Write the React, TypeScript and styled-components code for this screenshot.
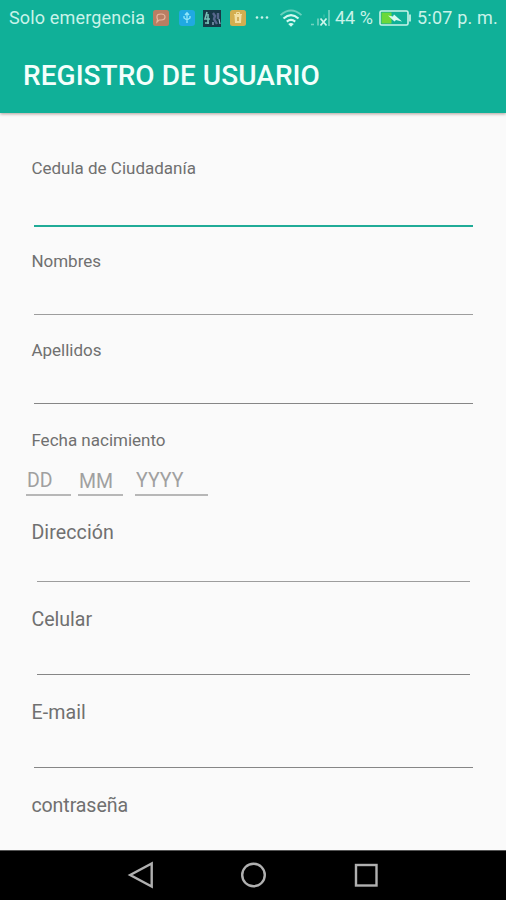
import React from 'react';
import styled, { createGlobalStyle } from 'styled-components';

const GlobalStyle = createGlobalStyle`
  * { box-sizing: border-box; }
  body { margin: 0; background: #fafafa; font-family: Roboto, sans-serif; }
`;

const Screen = styled.div`
  display: flex;
  flex-direction: column;
  width: 506px;
  height: 900px;
  overflow: hidden;
  background: #fafafa;
`;

const Header = styled.header`
  flex: none;
  height: 113px;
  background: #10b098;
  box-shadow: 0 1px 3px rgba(60, 20, 10, 0.4);
`;

const StatusBar = styled.div`
  display: flex;
  align-items: center;
  height: 36px;
  padding-left: 9px;
  color: #c9f3e9;
`;

const StatusText = styled.span<{ $width: number; $spacing?: number; $left?: number }>`
  flex: none;
  width: ${p => p.$width}px;
  margin-left: ${p => p.$left ?? 0}px;
  font-size: 18px;
  line-height: 22px;
  white-space: nowrap;
  letter-spacing: ${p => p.$spacing ?? 0}px;
`;

const StatusIcon = styled.svg<{ $left: number }>`
  flex: none;
  display: block;
  margin-left: ${p => p.$left}px;
`;

const Title = styled.h1`
  margin: 0;
  padding: 23px 0 0 23px;
  color: #f4fffc;
  font-size: 28px;
  font-weight: 500;
  line-height: 34px;
  letter-spacing: 0.04px;
`;

const Form = styled.form`
  flex: 1;
  min-height: 0;
  overflow: hidden;
  padding: 45px 33px 0 31px;
`;

const Field = styled.div<{ $after?: number }>`
  display: flex;
  flex-direction: column;
  align-items: flex-start;
  margin-bottom: ${p => p.$after ?? 26}px;
`;

const Label = styled.label<{ $large?: boolean; $spacing?: number }>`
  padding-left: 0.4px;
  color: #707070;
  font-size: ${p => (p.$large ? 19.6 : 17)}px;
  line-height: ${p => (p.$large ? 24 : 20)}px;
  letter-spacing: ${p => p.$spacing ?? 0}px;
`;

const Input = styled.input<{ $height: number; $inset?: boolean; $active?: boolean; $tone?: string }>`
  width: ${p => (p.$inset ? 433 : 439)}px;
  height: ${p => p.$height}px;
  margin: 0 0 0 ${p => (p.$inset ? 6 : 3)}px;
  padding: 0;
  border: 0;
  border-bottom: ${p => (p.$active ? '2px solid #20ab97' : `1px solid ${p.$tone ?? '#868686'}`)};
  outline: 0;
  background: transparent;
  font: 18px Roboto, sans-serif;
`;

const DateRow = styled.div`
  display: flex;
  align-items: flex-end;
  height: 46px;
  margin-left: -5px;
`;

const DateInput = styled.input<{ $width: number; $left?: number; $top: number }>`
  width: ${p => p.$width}px;
  height: 34px;
  margin: 0 0 0 ${p => p.$left ?? 0}px;
  padding: ${p => p.$top}px 0 0 1px;
  border: 0;
  border-bottom: 2px solid #b7b7b7;
  border-radius: 0;
  outline: 0;
  background: transparent;
  font: 19.5px Roboto, sans-serif;
  &::placeholder { color: #a0a0a0; opacity: 1; }
`;

const NavBar = styled.nav`
  flex: none;
  display: flex;
  align-items: center;
  justify-content: center;
  gap: 85px;
  height: 50px;
  border-top: 1px solid #555;
  background: #000;
`;

const NavIcon = styled.svg`
  display: block;
  margin-top: -2px;
  fill: none;
  stroke: #b0b0b0;
  stroke-width: 2.4;
`;

function StatusIcons() {
  return (
    <>
      <StatusIcon $left={7} width="18" height="18" viewBox="0 0 18 18">
        <rect x="1" y="1" width="16" height="16" rx="2.5" fill="#b97e63" />
        <path d="M5 7.5Q5 5 9 5t4 3-4 3H7l-2 2 .5-3Q4.7 9 5 7.5Z" fill="none" stroke="#e6b69f" strokeWidth="1.2" />
      </StatusIcon>
      <StatusIcon $left={8} width="18" height="18" viewBox="0 0 18 18">
        <rect x="1" y="1" width="16" height="16" rx="3" fill="#20a9e2" />
        <path d="M9 14V5M7 6l2-2.3L11 6M6 7v2l3 2 3-2V7" fill="none" stroke="#92e6fa" strokeWidth="1.3" />
      </StatusIcon>
      <StatusIcon $left={6} width="20" height="19" viewBox="0 0 20 19">
        <path d="M1 1h18v17H1Z" fill="#173947" />
        <path d="M5 3 3 10h5M6 5v10M3 14h4" fill="none" stroke="#78bfb7" strokeWidth="1.6" />
        <path d="m11 4 2 3-1 3 3 5M16 4v6" fill="none" stroke="#56678c" strokeWidth="2.4" />
        <path d="M11 13v3M17 10l1 5" stroke="#9bb5cf" strokeWidth="1.2" />
      </StatusIcon>
      <StatusIcon $left={7} width="18" height="18" viewBox="0 0 18 18">
        <rect x="1" y="1" width="16" height="16" rx="2.5" fill="#d3ae50" />
        <path d="M5.5 6h7l-.5 8H6Z" fill="#f2dfa2" />
        <path d="M5 5.5h8M7.5 5V3.5h3V5" fill="none" stroke="#f2dfa2" />
        <path d="M9 8v4" stroke="#c39b3e" strokeWidth="1.4" />
      </StatusIcon>
      <StatusIcon $left={7} width="16" height="6" viewBox="0 0 16 6" fill="#c9f3e9">
        <circle cx="3" cy="2.5" r="1.3" />
        <circle cx="8" cy="2.5" r="1.3" />
        <circle cx="13" cy="2.5" r="1.3" />
      </StatusIcon>
      <StatusIcon $left={9} width="24" height="20" viewBox="0 0 24 20" fill="none" strokeWidth="1.8">
        <path d="M1.5 7.2Q12-2.2 22.5 7.2" stroke="#68d0bd" />
        <path d="M4.5 10.5q7.5-6.7 15 0M7.8 13.6q4.2-3.5 8.4 0" stroke="#d4faf1" strokeWidth="2.2" />
        <path d="m9.2 16 2.8 2.8 2.8-2.8q-2.8-2-5.6 0Z" fill="#d4faf1" stroke="none" />
      </StatusIcon>
      <StatusIcon $left={7} width="22" height="19" viewBox="0 0 22 19" fill="none">
        <path d="M1 15.5h3M8 9.5v7M19 1v16" stroke="#72d2c0" strokeWidth="1.7" />
        <path d="M14 5.5v3" stroke="#4fc5af" />
        <path d="m10.5 9.5 6 7m0-7-6 7" stroke="#cef6ec" strokeWidth="1.8" />
      </StatusIcon>
    </>
  );
}

export default function App() {
  return (
    <>
      <GlobalStyle />
      <Screen>
        <Header>
          <StatusBar>
            <StatusText $width={136} $spacing={0.15}>Solo emergencia</StatusText>
            <StatusIcons />
            <StatusText $left={3} $width={39}>44 %</StatusText>
            <StatusIcon $left={4} width="34" height="18" viewBox="0 0 34 18">
              <rect x="2" y="2" width="28" height="14" rx="1.5" fill="none" stroke="#c9f3e9" strokeWidth="1.6" />
              <path d="M3.5 3.5h10v11h-10Z" fill="#6bd83b" />
              <path d="M32 5.5v7" stroke="#c9f3e9" strokeWidth="1.7" />
              <path d="m10 6.5 5 1 1-2 8 7-6-1.5-1.5 1.5Z" fill="#d7faf0" />
            </StatusIcon>
            <StatusText $left={5} $width={82} $spacing={0.2}>5:07 p. m.</StatusText>
          </StatusBar>
          <Title>REGISTRO DE USUARIO</Title>
        </Header>
        <Form>
          <Field $after={24}>
            <Label htmlFor="cedula">Cedula de Ciudadanía</Label>
            <Input id="cedula" $height={49} $active />
          </Field>
          <Field $after={25}>
            <Label htmlFor="nombres">Nombres</Label>
            <Input id="nombres" $height={44} $tone="#9d9d9d" />
          </Field>
          <Field>
            <Label htmlFor="apellidos">Apellidos</Label>
            <Input id="apellidos" $height={44} />
          </Field>
          <Field $after={25}>
            <Label htmlFor="dia">Fecha nacimiento</Label>
            <DateRow>
              <DateInput id="dia" placeholder="DD" $width={45} $top={4} />
              <DateInput placeholder="MM" $width={45} $left={7} $top={6} />
              <DateInput placeholder="YYYY" $width={73} $left={12} $top={4} />
            </DateRow>
          </Field>
          <Field>
            <Label htmlFor="direccion" $large $spacing={0.1}>Dirección</Label>
            <Input id="direccion" $height={37} $inset $tone="#9d9d9d" />
          </Field>
          <Field>
            <Label htmlFor="celular" $large>Celular</Label>
            <Input id="celular" $height={43} $inset />
          </Field>
          <Field $after={26}>
            <Label htmlFor="email" $large $spacing={0.1}>E-mail</Label>
            <Input id="email" type="email" $height={43} />
          </Field>
          <Field>
            <Label $large $spacing={-0.1}>contraseña</Label>
          </Field>
        </Form>
        <NavBar>
          <NavIcon width="28" height="28" viewBox="0 0 28 28"><path d="M25.7 2.5v23L4.2 14Z" /></NavIcon>
          <NavIcon width="28" height="28" viewBox="0 0 28 28"><circle cx="14.5" cy="14" r="11.3" /></NavIcon>
          <NavIcon width="28" height="28" viewBox="0 0 28 28"><rect x="4" y="4" width="20.5" height="20.5" /></NavIcon>
        </NavBar>
      </Screen>
    </>
  );
}
